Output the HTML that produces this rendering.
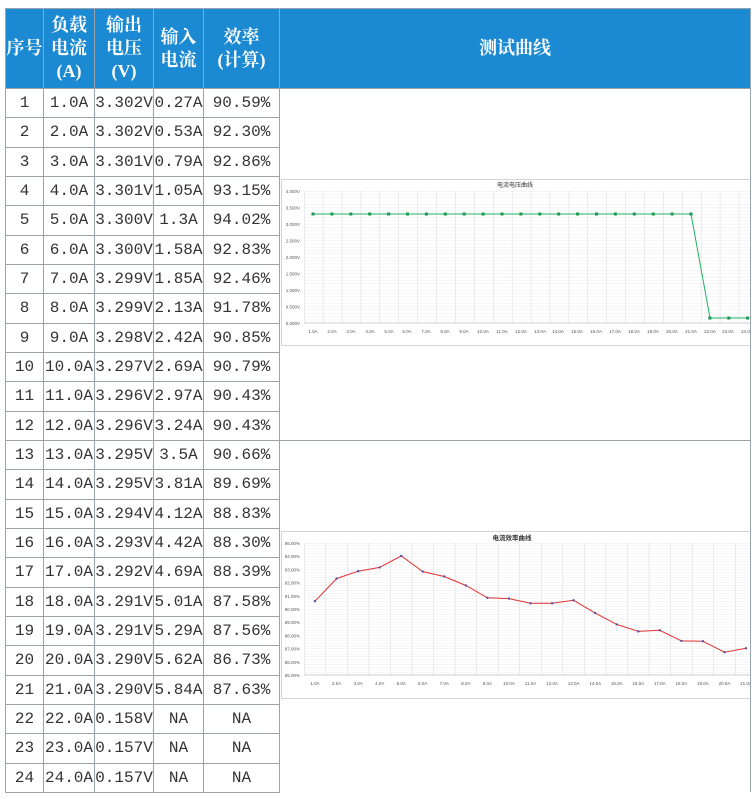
<!DOCTYPE html>
<html><head><meta charset="utf-8"><style>
body{margin:0;width:755px;height:798px;background:#fff;position:relative;overflow:hidden}
table{position:absolute;left:5px;top:8px;border-collapse:collapse;table-layout:fixed;font-family:"Liberation Mono","Noto Serif CJK SC",monospace;font-size:16px;color:#333}
td{border:1px solid #9aa3ab;padding:0;text-align:center;white-space:nowrap;overflow:hidden;height:28.33px;line-height:28px}
th{background:#1b8ad3;color:#fff;border:1px solid #9aa3ab;font-family:"Liberation Serif","Noto Serif CJK SC",serif;font-size:18px;font-weight:bold;line-height:23px;height:79px;padding:0}
td.c{border-top:none;border-bottom:none}
svg{position:absolute;left:0;top:0}
</style></head><body>
<table>
<colgroup><col style="width:38px"><col style="width:51px"><col style="width:59px"><col style="width:50px"><col style="width:76px"><col style="width:471px"></colgroup>
<tr><th>序号</th><th>负载<br>电流<br>(A)</th><th>输出<br>电压<br>(V)</th><th>输入<br>电流</th><th>效率<br>(计算)</th><th>测试曲线</th></tr>
<tr><td>1</td><td>1.0A</td><td>3.302V</td><td>0.27A</td><td>90.59%</td><td class="c" rowspan="12" style="border-bottom:1px solid #9aa3ab"></td></tr>
<tr><td>2</td><td>2.0A</td><td>3.302V</td><td>0.53A</td><td>92.30%</td></tr>
<tr><td>3</td><td>3.0A</td><td>3.301V</td><td>0.79A</td><td>92.86%</td></tr>
<tr><td>4</td><td>4.0A</td><td>3.301V</td><td>1.05A</td><td>93.15%</td></tr>
<tr><td>5</td><td>5.0A</td><td>3.300V</td><td>1.3A</td><td>94.02%</td></tr>
<tr><td>6</td><td>6.0A</td><td>3.300V</td><td>1.58A</td><td>92.83%</td></tr>
<tr><td>7</td><td>7.0A</td><td>3.299V</td><td>1.85A</td><td>92.46%</td></tr>
<tr><td>8</td><td>8.0A</td><td>3.299V</td><td>2.13A</td><td>91.78%</td></tr>
<tr><td>9</td><td>9.0A</td><td>3.298V</td><td>2.42A</td><td>90.85%</td></tr>
<tr><td>10</td><td>10.0A</td><td>3.297V</td><td>2.69A</td><td>90.79%</td></tr>
<tr><td>11</td><td>11.0A</td><td>3.296V</td><td>2.97A</td><td>90.43%</td></tr>
<tr><td>12</td><td>12.0A</td><td>3.296V</td><td>3.24A</td><td>90.43%</td></tr>
<tr><td>13</td><td>13.0A</td><td>3.295V</td><td>3.5A</td><td>90.66%</td><td class="c" rowspan="12"></td></tr>
<tr><td>14</td><td>14.0A</td><td>3.295V</td><td>3.81A</td><td>89.69%</td></tr>
<tr><td>15</td><td>15.0A</td><td>3.294V</td><td>4.12A</td><td>88.83%</td></tr>
<tr><td>16</td><td>16.0A</td><td>3.293V</td><td>4.42A</td><td>88.30%</td></tr>
<tr><td>17</td><td>17.0A</td><td>3.292V</td><td>4.69A</td><td>88.39%</td></tr>
<tr><td>18</td><td>18.0A</td><td>3.291V</td><td>5.01A</td><td>87.58%</td></tr>
<tr><td>19</td><td>19.0A</td><td>3.291V</td><td>5.29A</td><td>87.56%</td></tr>
<tr><td>20</td><td>20.0A</td><td>3.290V</td><td>5.62A</td><td>86.73%</td></tr>
<tr><td>21</td><td>21.0A</td><td>3.290V</td><td>5.84A</td><td>87.63%</td></tr>
<tr><td>22</td><td>22.0A</td><td>0.158V</td><td>NA</td><td>NA</td></tr>
<tr><td>23</td><td>23.0A</td><td>0.157V</td><td>NA</td><td>NA</td></tr>
<tr><td>24</td><td>24.0A</td><td>0.157V</td><td>NA</td><td>NA</td></tr>
</table>
<svg width="755" height="798" font-family="Liberation Sans,Noto Sans CJK SC,sans-serif">
<defs>
<pattern id="g1" x="304" y="191" width="18.9" height="3.3" patternUnits="userSpaceOnUse"><line x1="0" y1="0" x2="18.9" y2="0" stroke="#e4e4e4" stroke-width="0.6"/><line x1="0" y1="0" x2="0" y2="3.3" stroke="#d0d0d0" stroke-width="0.8"/></pattern>
<pattern id="g2" x="304" y="543" width="21.55" height="2.64" patternUnits="userSpaceOnUse"><line x1="0" y1="0" x2="21.55" y2="0" stroke="#e4e4e4" stroke-width="0.6"/><line x1="0" y1="0" x2="0" y2="2.64" stroke="#d0d0d0" stroke-width="0.8"/></pattern>
<clipPath id="cl"><rect x="281" y="0" width="469" height="798"/></clipPath>
</defs>
<g clip-path="url(#cl)">
<rect x="281.5" y="179.5" width="475" height="166" fill="#fff" stroke="#d4d4d4"/>
<rect x="304" y="191" width="450" height="132" fill="url(#g1)"/>
<line x1="304" y1="323" x2="754" y2="323" stroke="#bbb" stroke-width="0.8"/>
<text x="515" y="187" font-size="6" text-anchor="middle" fill="#333">电流电压曲线</text>
<g font-size="4.5" fill="#555" text-anchor="end">
<text x="300" y="193">4.000V</text><text x="300" y="209.5">3.500V</text><text x="300" y="226">3.000V</text><text x="300" y="242.5">2.500V</text><text x="300" y="259">2.000V</text><text x="300" y="275.5">1.500V</text><text x="300" y="292">1.000V</text><text x="300" y="308.5">0.500V</text><text x="300" y="325">0.000V</text>
</g>
<g font-size="4.5" fill="#555" text-anchor="middle">
<text x="313" y="333">1.0A</text><text x="332" y="333">2.0A</text><text x="351" y="333">3.0A</text><text x="370" y="333">4.0A</text><text x="389" y="333">5.0A</text><text x="407" y="333">6.0A</text><text x="426" y="333">7.0A</text><text x="445" y="333">8.0A</text><text x="464" y="333">9.0A</text><text x="483" y="333">10.0A</text><text x="502" y="333">11.0A</text><text x="521" y="333">12.0A</text><text x="540" y="333">13.0A</text><text x="558" y="333">14.0A</text><text x="577" y="333">15.0A</text><text x="596" y="333">16.0A</text><text x="615" y="333">17.0A</text><text x="634" y="333">18.0A</text><text x="653" y="333">19.0A</text><text x="672" y="333">20.0A</text><text x="691" y="333">21.0A</text><text x="710" y="333">22.0A</text><text x="728" y="333">23.0A</text><text x="747" y="333">24.0A</text>
</g>
<polyline points="313,214 691,214 710,318 748,318" fill="none" stroke="#22b060" stroke-width="1"/>
<g fill="#1a9a50">
<rect x="311.5" y="212.5" width="3" height="3"/><rect x="330.4" y="212.5" width="3" height="3"/><rect x="349.3" y="212.5" width="3" height="3"/><rect x="368.2" y="212.5" width="3" height="3"/><rect x="387.1" y="212.5" width="3" height="3"/><rect x="406" y="212.5" width="3" height="3"/><rect x="424.9" y="212.5" width="3" height="3"/><rect x="443.8" y="212.5" width="3" height="3"/><rect x="462.7" y="212.5" width="3" height="3"/><rect x="481.6" y="212.5" width="3" height="3"/><rect x="500.5" y="212.5" width="3" height="3"/><rect x="519.4" y="212.5" width="3" height="3"/><rect x="538.3" y="212.5" width="3" height="3"/><rect x="557.2" y="212.5" width="3" height="3"/><rect x="576.1" y="212.5" width="3" height="3"/><rect x="595" y="212.5" width="3" height="3"/><rect x="613.9" y="212.5" width="3" height="3"/><rect x="632.8" y="212.5" width="3" height="3"/><rect x="651.7" y="212.5" width="3" height="3"/><rect x="670.6" y="212.5" width="3" height="3"/><rect x="689.5" y="212.5" width="3" height="3"/><rect x="708.4" y="316.5" width="3" height="3"/><rect x="727.3" y="316.5" width="3" height="3"/><rect x="746.2" y="316.5" width="3" height="3"/>
</g>

<rect x="281.5" y="531.5" width="475" height="167" fill="#fff" stroke="#d4d4d4"/>
<rect x="304" y="543" width="450" height="132" fill="url(#g2)"/>
<line x1="304" y1="675" x2="754" y2="675" stroke="#bbb" stroke-width="0.8"/>
<text x="512" y="540" font-size="6.5" font-weight="bold" text-anchor="middle" fill="#333">电流效率曲线</text>
<g font-size="4.5" fill="#555" text-anchor="end">
<text x="300" y="545">95.00%</text><text x="300" y="558.2">94.00%</text><text x="300" y="571.4">93.00%</text><text x="300" y="584.6">92.00%</text><text x="300" y="597.8">91.00%</text><text x="300" y="611">90.00%</text><text x="300" y="624.2">89.00%</text><text x="300" y="637.4">88.00%</text><text x="300" y="650.6">87.00%</text><text x="300" y="663.8">86.00%</text><text x="300" y="677">85.00%</text>
</g>
<g font-size="4.5" fill="#555" text-anchor="middle">
<text x="315" y="685">1.0A</text><text x="336.6" y="685">2.0A</text><text x="358.1" y="685">3.0A</text><text x="379.7" y="685">4.0A</text><text x="401.2" y="685">5.0A</text><text x="422.8" y="685">6.0A</text><text x="444.3" y="685">7.0A</text><text x="465.9" y="685">8.0A</text><text x="487.4" y="685">9.0A</text><text x="509" y="685">10.0A</text><text x="530.5" y="685">11.0A</text><text x="552.1" y="685">12.0A</text><text x="573.6" y="685">13.0A</text><text x="595.2" y="685">14.0A</text><text x="616.7" y="685">15.0A</text><text x="638.3" y="685">16.0A</text><text x="659.8" y="685">17.0A</text><text x="681.4" y="685">18.0A</text><text x="702.9" y="685">19.0A</text><text x="724.5" y="685">20.0A</text><text x="746" y="685">21.0A</text>
</g>
<polyline points="315,601.2 336.6,578.6 358.1,571.2 379.7,567.4 401.2,555.9 422.8,571.6 444.3,576.5 465.9,585.5 487.4,597.8 509,598.6 530.5,603.3 552.1,603.3 573.6,600.3 595.2,613.1 616.7,624.4 638.3,631.4 659.8,630.3 681.4,640.9 702.9,641.2 724.5,652.2 746,648.3" fill="none" stroke="#e03030" stroke-width="1"/>
<g fill="#5050a0">
<circle cx="315" cy="601.2" r="1.2"/><circle cx="336.6" cy="578.6" r="1.2"/><circle cx="358.1" cy="571.2" r="1.2"/><circle cx="379.7" cy="567.4" r="1.2"/><circle cx="401.2" cy="555.9" r="1.2"/><circle cx="422.8" cy="571.6" r="1.2"/><circle cx="444.3" cy="576.5" r="1.2"/><circle cx="465.9" cy="585.5" r="1.2"/><circle cx="487.4" cy="597.8" r="1.2"/><circle cx="509" cy="598.6" r="1.2"/><circle cx="530.5" cy="603.3" r="1.2"/><circle cx="552.1" cy="603.3" r="1.2"/><circle cx="573.6" cy="600.3" r="1.2"/><circle cx="595.2" cy="613.1" r="1.2"/><circle cx="616.7" cy="624.4" r="1.2"/><circle cx="638.3" cy="631.4" r="1.2"/><circle cx="659.8" cy="630.3" r="1.2"/><circle cx="681.4" cy="640.9" r="1.2"/><circle cx="702.9" cy="641.2" r="1.2"/><circle cx="724.5" cy="652.2" r="1.2"/><circle cx="746" cy="648.3" r="1.2"/>
</g>
</g>
</svg>
</body></html>
